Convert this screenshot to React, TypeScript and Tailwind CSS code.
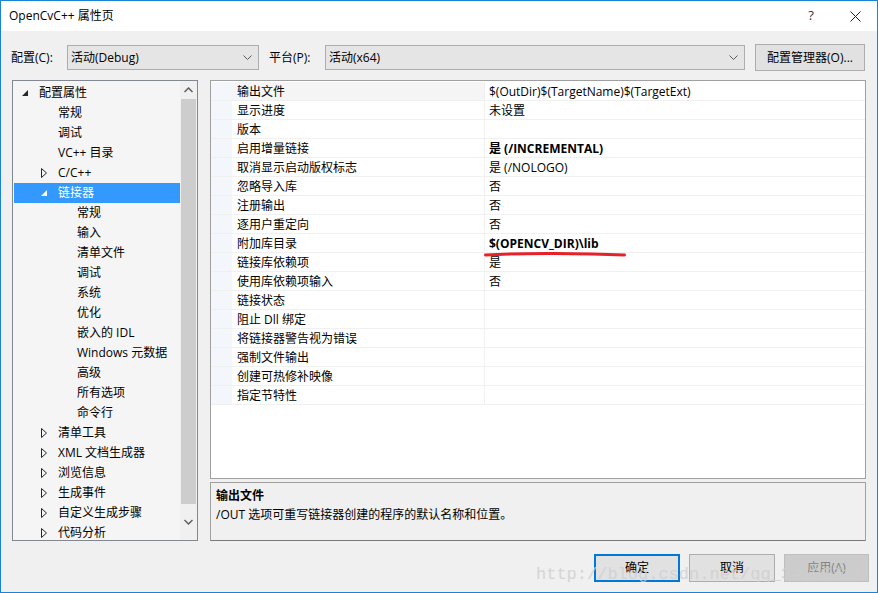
import React from 'react'

const font = { fontFamily: '"Open Sans", "Noto Sans CJK SC", sans-serif' }

type TreeItem = { label: string; level: 0 | 1 | 2; arrow?: 'open' | 'closed'; selected?: boolean }

const tree: TreeItem[] = [
  { label: '配置属性', level: 0, arrow: 'open' },
  { label: '常规', level: 1 },
  { label: '调试', level: 1 },
  { label: 'VC++ 目录', level: 1 },
  { label: 'C/C++', level: 1, arrow: 'closed' },
  { label: '链接器', level: 1, arrow: 'open', selected: true },
  { label: '常规', level: 2 },
  { label: '输入', level: 2 },
  { label: '清单文件', level: 2 },
  { label: '调试', level: 2 },
  { label: '系统', level: 2 },
  { label: '优化', level: 2 },
  { label: '嵌入的 IDL', level: 2 },
  { label: 'Windows 元数据', level: 2 },
  { label: '高级', level: 2 },
  { label: '所有选项', level: 2 },
  { label: '命令行', level: 2 },
  { label: '清单工具', level: 1, arrow: 'closed' },
  { label: 'XML 文档生成器', level: 1, arrow: 'closed' },
  { label: '浏览信息', level: 1, arrow: 'closed' },
  { label: '生成事件', level: 1, arrow: 'closed' },
  { label: '自定义生成步骤', level: 1, arrow: 'closed' },
  { label: '代码分析', level: 1, arrow: 'closed' },
]

const indent = ['pl-[8px]', 'pl-[27px]', 'pl-[46px]']

const props: { name: string; value: string; bold?: boolean }[] = [
  { name: '输出文件', value: '$(OutDir)$(TargetName)$(TargetExt)' },
  { name: '显示进度', value: '未设置' },
  { name: '版本', value: '' },
  { name: '启用增量链接', value: '是 (/INCREMENTAL)', bold: true },
  { name: '取消显示启动版权标志', value: '是 (/NOLOGO)' },
  { name: '忽略导入库', value: '否' },
  { name: '注册输出', value: '否' },
  { name: '逐用户重定向', value: '否' },
  { name: '附加库目录', value: '$(OPENCV_DIR)\\lib', bold: true },
  { name: '链接库依赖项', value: '是' },
  { name: '使用库依赖项输入', value: '否' },
  { name: '链接状态', value: '' },
  { name: '阻止 Dll 绑定', value: '' },
  { name: '将链接器警告视为错误', value: '' },
  { name: '强制文件输出', value: '' },
  { name: '创建可热修补映像', value: '' },
  { name: '指定节特性', value: '' },
]

const Arrow = ({ kind, white }: { kind: 'open' | 'closed'; white?: boolean }) =>
  kind === 'open' ? (
    <svg width="6" height="6" viewBox="0 0 6 6">
      <polygon points="6,0 6,6 0,6" fill={white ? '#fff' : '#262626'} />
    </svg>
  ) : (
    <svg width="6" height="10" viewBox="0 0 6 10">
      <polygon points="0.5,0.5 5.5,5 0.5,9.5" fill="none" stroke="#262626" strokeWidth="1" />
    </svg>
  )

const Combo = ({ text, w }: { text: string; w: string }) => (
  <div className={`${w} h-[25px] border border-[#adadad] bg-[#e5e5e5] flex items-center justify-between pl-[3px] pr-[6px]`}>
    <span>{text}</span>
    <svg width="9" height="6" viewBox="0 0 9 6">
      <polyline points="0.5,0.5 4.5,4.5 8.5,0.5" fill="none" stroke="#5a5a5a" strokeWidth="1" />
    </svg>
  </div>
)

export default function App() {
  return (
    <div
      className="relative w-[878px] h-[593px] border border-[#1883d7] bg-[#f0f0f0] flex flex-col text-[12px] text-black overflow-hidden"
      style={font}
    >
      {/* title bar */}
      <div className="h-[30px] bg-white flex items-center pl-[8px]">
        <span className="flex-1">OpenCvC++ 属性页</span>
        <span className="w-[44px] text-center text-[13px] text-[#333]">?</span>
        <div className="w-[44px] flex justify-center">
          <svg width="11" height="11" viewBox="0 0 11 11">
            <path d="M0.5 0.5 L10.5 10.5 M10.5 0.5 L0.5 10.5" stroke="#222" strokeWidth="1" />
          </svg>
        </div>
      </div>

      {/* config row */}
      <div className="mt-[13px] h-[27px] flex items-center pl-[10px] pr-[12px]">
        <span className="w-[56px]">配置(C):</span>
        <Combo text="活动(Debug)" w="w-[192px]" />
        <span className="ml-[10px] w-[56px]">平台(P):</span>
        <Combo text="活动(x64)" w="w-[420px]" />
        <button className="ml-auto w-[110px] h-[27px] border border-[#adadad] bg-[#e1e1e1]">配置管理器(O)...</button>
      </div>

      {/* main area */}
      <div className="mt-[9px] flex gap-[12px] pl-[11px] pr-[11px]">
        {/* tree */}
        <div className="w-[186px] h-[461px] border border-[#828790] bg-[#f5f5f5] flex">
          <div className="flex-1 pt-[2px] overflow-hidden">
            {tree.map((t, i) => (
              <div
                key={i}
                className={`ml-px h-[20px] flex items-center ${indent[t.level]} ${t.selected ? 'bg-[#3399ff] text-white' : ''}`}
              >
                <div className="w-[17px] flex items-center">
                  {t.arrow && <Arrow kind={t.arrow} white={t.selected} />}
                </div>
                <span className="whitespace-nowrap">{t.label}</span>
              </div>
            ))}
          </div>
          <div className="w-[17px] bg-[#f0f0f0] flex flex-col items-center">
            <div className="h-[18px] flex items-center justify-center">
              <svg width="9" height="6" viewBox="0 0 9 6">
                <polyline points="0.5,5 4.5,1 8.5,5" fill="none" stroke="#606060" strokeWidth="1.5" />
              </svg>
            </div>
            <div className="w-[15px] h-[405px] bg-[#cdcdcd]" />
            <div className="flex-1 flex items-center justify-center">
              <svg width="9" height="6" viewBox="0 0 9 6">
                <polyline points="0.5,1 4.5,5 8.5,1" fill="none" stroke="#606060" strokeWidth="1.5" />
              </svg>
            </div>
          </div>
        </div>

        {/* grid + description */}
        <div className="flex-1 flex flex-col">
          <div className="relative h-[399px] border border-[#a0a0a0] bg-white pt-[1px]">
            {props.map((p, i) => (
              <div key={i} className="h-[19px] flex border-b border-[#f0f0f0]">
                <div className="w-[21px] bg-[#f3f6fb]" />
                <div className={`w-[253px] pl-[5px] pt-[2px] flex items-center border-r border-[#f0f0f0] ${i === 0 ? 'bg-[#f5f5f5]' : ''}`}>
                  {p.name}
                </div>
                <div className={`flex-1 pl-[4px] pt-[2px] flex items-center ${p.bold ? 'font-bold' : ''}`}>{p.value}</div>
              </div>
            ))}
            <svg className="absolute left-[273px] top-[169px]" width="142" height="8" viewBox="0 0 142 8">
              <path d="M1.5 5 Q 30 3.2 70 3.4 T 140.5 5" fill="none" stroke="#e8202a" strokeWidth="3" strokeLinecap="round" />
            </svg>
          </div>
          <div className="mt-[3px] h-[59px] border border-[#a0a0a0] border-b-[#7a7a7a] bg-[#f0f0f0] pl-[5px] pt-[3px]">
            <div className="font-bold leading-[19px]">输出文件</div>
            <div className="leading-[19px]">/OUT 选项可重写链接器创建的程序的默认名称和位置。</div>
          </div>
        </div>
      </div>

      {/* buttons */}
      <div className="mt-[13px] h-[28px] flex justify-end gap-[9px] pr-[8px]">
        <button className="w-[86px] border-2 border-[#0078d7] bg-[#e1e1e1]">确定</button>
        <button className="w-[86px] border border-[#adadad] bg-[#e1e1e1]">取消</button>
        <button className="w-[85px] border border-[#bfbfbf] bg-[#cccccc] text-[#838383]">应用(A)</button>
      </div>

      {/* watermark */}
      <div
        className="absolute left-[535px] top-[561px] text-[17px] text-[#cfcfcf] opacity-80 whitespace-nowrap pointer-events-none"
        style={{ fontFamily: '"Liberation Mono", monospace' }}
      >
        http://blog.csdn.net/qq_34105717
      </div>
    </div>
  )
}
